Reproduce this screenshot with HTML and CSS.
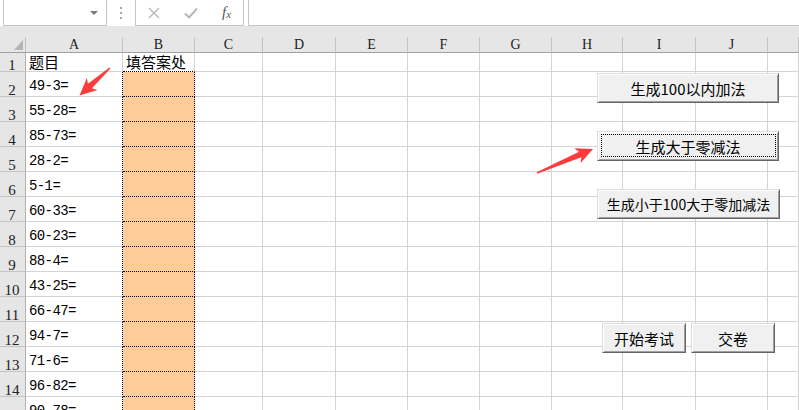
FILE: index.html
```html
<!DOCTYPE html>
<html lang="zh-CN">
<head>
    <meta charset="UTF-8">
    <title>口算练习</title>
    <link rel="stylesheet" href="styles.css">
</head>
<body>
<div class="page">
    <div class="formula-bar">
        <div class="name-box"><span class="caret"></span></div>
        <div class="grip"><i></i><i></i><i></i></div>
        <div class="fx-box">
            <svg class="ico" width="12" height="12" viewBox="0 0 12 12"><path d="M1 1L11 11M11 1L1 11" stroke="#b8b8b8" stroke-width="1.4" fill="none"/></svg>
            <svg class="ico ok" width="14" height="12" viewBox="0 0 14 12"><path d="M1 6.5L5 10.5L13 1.5" stroke="#b8b8b8" stroke-width="2" fill="none"/></svg>
            <span class="fx">f<sub>x</sub></span>
        </div>
        <div class="formula-input"></div>
    </div>
    <div class="strip"></div>

    <div class="sheet">
        <!-- column headers -->
        <div class="corner"><svg width="25" height="15" viewBox="0 0 25 15"><polygon points="14,13 23,13 23,3" fill="#b4b4b4"/></svg></div>
        <div class="ch">A</div><div class="ch">B</div><div class="ch">C</div><div class="ch">D</div><div class="ch">E</div><div class="ch">F</div><div class="ch">G</div><div class="ch">H</div><div class="ch">I</div><div class="ch">J</div><div class="ch"></div>

        <div class="rh">1</div><div class="cell cjk">题目</div><div class="cell cjk ans-top">填答案处</div><div></div><div></div><div></div><div></div><div></div><div></div><div></div><div></div><div></div>
        <div class="rh">2</div><div class="cell q">49-3=</div><div class="ans"></div><div></div><div></div><div></div><div></div><div></div><div></div><div></div><div></div><div></div>
        <div class="rh">3</div><div class="cell q">55-28=</div><div class="ans"></div><div></div><div></div><div></div><div></div><div></div><div></div><div></div><div></div><div></div>
        <div class="rh">4</div><div class="cell q">85-73=</div><div class="ans"></div><div></div><div></div><div></div><div></div><div></div><div></div><div></div><div></div><div></div>
        <div class="rh">5</div><div class="cell q">28-2=</div><div class="ans"></div><div></div><div></div><div></div><div></div><div></div><div></div><div></div><div></div><div></div>
        <div class="rh">6</div><div class="cell q">5-1=</div><div class="ans"></div><div></div><div></div><div></div><div></div><div></div><div></div><div></div><div></div><div></div>
        <div class="rh">7</div><div class="cell q">60-33=</div><div class="ans"></div><div></div><div></div><div></div><div></div><div></div><div></div><div></div><div></div><div></div>
        <div class="rh">8</div><div class="cell q">60-23=</div><div class="ans"></div><div></div><div></div><div></div><div></div><div></div><div></div><div></div><div></div><div></div>
        <div class="rh">9</div><div class="cell q">88-4=</div><div class="ans"></div><div></div><div></div><div></div><div></div><div></div><div></div><div></div><div></div><div></div>
        <div class="rh">10</div><div class="cell q">43-25=</div><div class="ans"></div><div></div><div></div><div></div><div></div><div></div><div></div><div></div><div></div><div></div>
        <div class="rh">11</div><div class="cell q">66-47=</div><div class="ans"></div><div></div><div></div><div></div><div></div><div></div><div></div><div></div><div></div><div></div>
        <div class="rh">12</div><div class="cell q">94-7=</div><div class="ans"></div><div></div><div></div><div></div><div></div><div></div><div></div><div></div><div></div><div></div>
        <div class="rh">13</div><div class="cell q">71-6=</div><div class="ans"></div><div></div><div></div><div></div><div></div><div></div><div></div><div></div><div></div><div></div>
        <div class="rh">14</div><div class="cell q">96-82=</div><div class="ans"></div><div></div><div></div><div></div><div></div><div></div><div></div><div></div><div></div><div></div>
        <div class="rh">15</div><div class="cell q">90-78=</div><div class="ans"></div><div></div><div></div><div></div><div></div><div></div><div></div><div></div><div></div><div></div>
    </div>

    <!-- form buttons floating over the sheet -->
    <button class="btn btn-add">生成100以内加法</button>
    <button class="btn btn-sub focused">生成大于零减法</button>
    <button class="btn btn-mix">生成小于100大于零加减法</button>
    <button class="btn btn-start">开始考试</button>
    <button class="btn btn-submit">交卷</button>

    <!-- red annotation arrows -->
    <svg class="arrows" width="799" height="410" viewBox="0 0 799 410">
        <polygon transform="translate(110 68) rotate(138)" points="0,-0.7 27,-3 24,-8 41,0 24,8 27,3 0,0.7" fill="#fb3c3c"/>
        <polygon transform="translate(537 173) rotate(-23.2)" points="0,-0.7 47,-3 44,-8 61,0 44,8 47,3 0,0.7" fill="#fb3c3c"/>
    </svg>
</div>
</body>
</html>
```

FILE: styles.css
```css
body {
    margin: 0;
    background: #fff;
    font-family: "Noto Sans CJK SC", sans-serif;
    overflow: hidden;
}
.page {
    position: relative;
    width: 799px;
    height: 410px;
    overflow: hidden;
}

/* formula bar */
.formula-bar {
    display: flex;
    height: 26px;
    padding-left: 3px;
    background: #fff;
}
.name-box {
    width: 104px;
    box-sizing: border-box;
    border: 1px solid #c6c6c6;
    border-top: none;
    display: flex;
    align-items: center;
    justify-content: flex-end;
    padding-right: 8px;
}
.caret {
    width: 0;
    height: 0;
    border-top: 4px solid #7a7a7a;
    border-left: 4px solid transparent;
    border-right: 4px solid transparent;
}
.grip {
    width: 28px;
    display: flex;
    flex-direction: column;
    align-items: center;
    justify-content: center;
    gap: 3px;
}
.grip i {
    width: 2px;
    height: 2px;
    background: #a8a8a8;
}
.fx-box {
    width: 109px;
    box-sizing: border-box;
    border: 1px solid #c6c6c6;
    border-top: none;
    display: flex;
    align-items: center;
    padding-left: 12px;
}
.ico.ok {
    margin-left: 24px;
}
.fx {
    margin-left: 24px;
    font-family: "Liberation Serif", serif;
    font-style: italic;
    font-size: 15px;
    color: #555;
    line-height: 1;
}
.fx sub {
    font-size: 11px;
    vertical-align: -1px;
}
.formula-input {
    flex: 1;
    margin-left: 4px;
    border-left: 1px solid #c6c6c6;
    border-bottom: 1px solid #c6c6c6;
}
.strip {
    height: 11px;
    background: #e6e6e6;
}

/* sheet grid */
.sheet {
    display: grid;
    grid-template-columns: 26px 97px 72px 68px 73px 72px 72px 72px 71px 73px 72px 1fr;
    grid-template-rows: 16px 19px repeat(14, 25px);
}
.sheet > div {
    box-sizing: border-box;
    min-width: 0;
    white-space: nowrap;
    border-right: 1px solid #d4d4d4;
    border-bottom: 1px solid #d4d4d4;
}
.sheet .corner {
    background: #e6e6e6;
    border-right-color: #c0c0c0;
    border-bottom-color: #a0a0a0;
}
.sheet .corner svg {
    display: block;
}
.sheet .ch {
    background: #e6e6e6;
    border-right-color: #c4c4c4;
    border-bottom-color: #a0a0a0;
    font-family: "Liberation Serif", serif;
    font-size: 14px;
    line-height: 15px;
    text-align: center;
    color: #222;
}
.sheet .rh {
    background: #e6e6e6;
    border-right-color: #b0b0b0;
    border-bottom-color: #c4c4c4;
    font-family: "Liberation Serif", serif;
    font-size: 15px;
    line-height: 12px;
    color: #222;
    display: flex;
    align-items: flex-end;
    justify-content: center;
    padding-right: 1px;
}
.cell {
    display: flex;
    align-items: flex-end;
    padding: 0 0 2px 3px;
    font-family: "Liberation Mono", "Noto Sans CJK SC", monospace;
    font-size: 14px;
    letter-spacing: -0.6px;
    line-height: 15px;
    color: #000;
}
.cell.cjk {
    font-family: "Noto Sans CJK SC", sans-serif;
    font-size: 15px;
    letter-spacing: 0;
    line-height: 16px;
    padding-bottom: 1px;
}
.sheet .q {
    border-right: 1px dotted #000;
}
.sheet .ans-top {
    border-bottom: 1px dotted #000;
}
.sheet .ans {
    background: #ffcc99;
    border-right: 1px dotted #000;
    border-bottom: 1px dotted #000;
}

/* form buttons */
.btn {
    position: absolute;
    box-sizing: border-box;
    height: 30px;
    padding: 0;
    background: #f0f0f0;
    border: 1px solid;
    border-color: #dcdcdc #646464 #646464 #dcdcdc;
    box-shadow: inset 1px 1px #fff, inset -1px -1px #a0a0a0;
    font-family: "Noto Sans CJK SC", sans-serif;
    font-size: 15px;
    color: #000;
    display: flex;
    align-items: center;
    justify-content: center;
}
.btn-add { left: 597px; top: 73px; width: 182px; }
.btn-sub { left: 597px; top: 131px; width: 182px; }
.btn-mix { left: 597px; top: 189px; width: 183px; font-size: 14px; }
.btn-start { left: 602px; top: 323px; width: 84px; }
.btn-submit { left: 691px; top: 323px; width: 84px; }
.btn.focused::after {
    content: "";
    position: absolute;
    top: 2px;
    left: 3px;
    right: 2px;
    bottom: 3px;
    border: 1px dotted #000;
}

.arrows {
    position: absolute;
    left: 0;
    top: 0;
    pointer-events: none;
}
```
